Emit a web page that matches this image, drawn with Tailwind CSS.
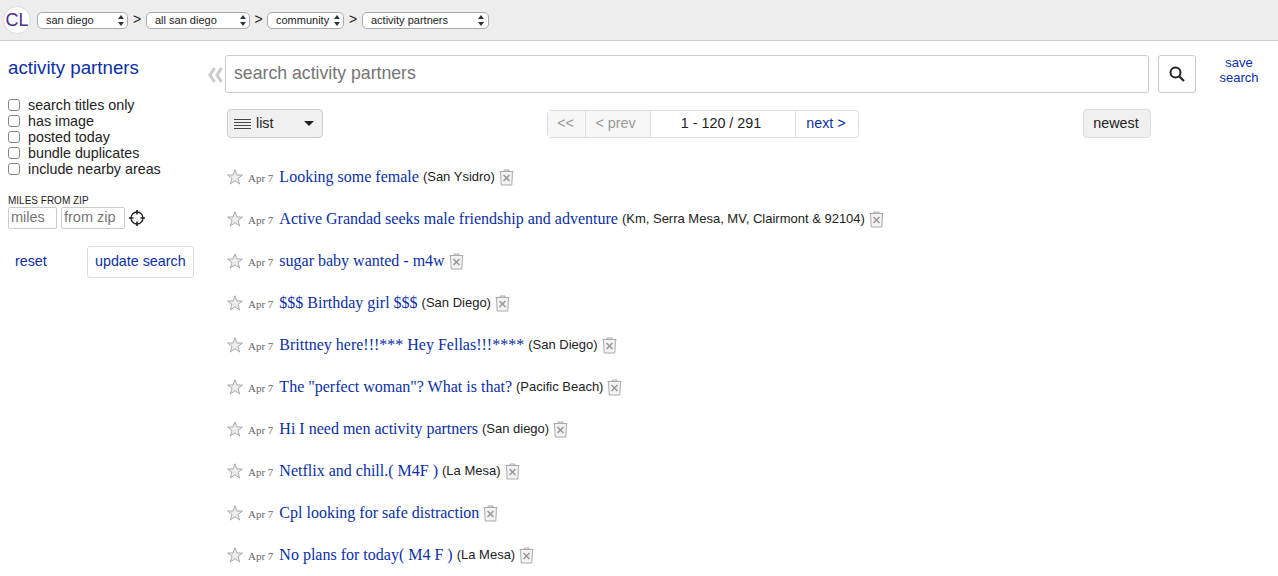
<!DOCTYPE html>
<html lang="en">
  <head>
    <meta charset="UTF-8" />
    <meta name="viewport" content="width=device-width, initial-scale=1.0" />
    <script src="https://cdn.jsdelivr.net/npm/@tailwindcss/browser@4"></script>
    <title>activity partners</title>
  </head>
  <body class="h-[576px] overflow-hidden bg-white font-['Liberation_Sans',Arial,sans-serif] text-[#222]">
    <header class="flex h-[41px] items-center border-b border-[#ccc] bg-[#ededed] pl-[3px] text-[11px]">
      <a class="flex h-[28px] w-[28px] items-center justify-center rounded-full border border-[#ddd] bg-white text-[18px] text-[#4b2a8c]">CL</a>
      <div class="ml-[6px] flex h-[17px] w-[91px] items-center justify-between rounded-[5px] border border-[#aaa] bg-white pl-[8px] pr-[3px]">san diego<svg class="h-[11px] w-[6px] text-[#333]" viewBox="0 0 6 11" fill="currentColor"><path d="M3 0 6 4H0zM3 11 0 7h6z"/></svg></div>
      <span class="-mt-[3px] w-[18px] text-center text-[14px] leading-none">&gt;</span>
      <div class="flex h-[17px] w-[104px] items-center justify-between rounded-[5px] border border-[#aaa] bg-white pl-[8px] pr-[3px]">all san diego<svg class="h-[11px] w-[6px] text-[#333]" viewBox="0 0 6 11" fill="currentColor"><path d="M3 0 6 4H0zM3 11 0 7h6z"/></svg></div>
      <span class="-mt-[3px] w-[17px] text-center text-[14px] leading-none">&gt;</span>
      <div class="flex h-[17px] w-[77px] items-center justify-between rounded-[5px] border border-[#aaa] bg-white pl-[8px] pr-[3px]">community<svg class="h-[11px] w-[6px] text-[#333]" viewBox="0 0 6 11" fill="currentColor"><path d="M3 0 6 4H0zM3 11 0 7h6z"/></svg></div>
      <span class="-mt-[3px] w-[18px] text-center text-[14px] leading-none">&gt;</span>
      <div class="flex h-[17px] w-[127px] items-center justify-between rounded-[5px] border border-[#aaa] bg-white pl-[8px] pr-[4px]">activity partners<svg class="h-[11px] w-[6px] text-[#333]" viewBox="0 0 6 11" fill="currentColor"><path d="M3 0 6 4H0zM3 11 0 7h6z"/></svg></div>
    </header>

    <div class="flex">
      <aside class="w-[205px] shrink-0 pl-[8px]">
        <h1 class="mt-[16px] text-[18.700px] leading-[22px] text-[#0a2fa8]">activity partners</h1>
        <div class="mt-[18px] flex flex-col text-[14.300px] leading-[16px]">
          <label class="flex items-center gap-[8px]"><span class="h-[12px] w-[12px] rounded-[3px] border border-[#888] bg-white"></span>search titles only</label>
          <label class="flex items-center gap-[8px]"><span class="h-[12px] w-[12px] rounded-[3px] border border-[#888] bg-white"></span>has image</label>
          <label class="flex items-center gap-[8px]"><span class="h-[12px] w-[12px] rounded-[3px] border border-[#888] bg-white"></span>posted today</label>
          <label class="flex items-center gap-[8px]"><span class="h-[12px] w-[12px] rounded-[3px] border border-[#888] bg-white"></span>bundle duplicates</label>
          <label class="flex items-center gap-[8px]"><span class="h-[12px] w-[12px] rounded-[3px] border border-[#888] bg-white"></span>include nearby areas</label>
        </div>
        <div class="mt-[18px] text-[10px] leading-[12px]">MILES FROM ZIP</div>
        <div class="flex items-center gap-[4px]">
          <div class="flex h-[22px] w-[49px] items-center rounded-[2px] border border-[#ccc] pl-[2px] text-[14.500px] text-[#777]">miles</div>
          <div class="flex h-[22px] w-[64px] items-center rounded-[2px] border border-[#ccc] pl-[2px] text-[14.500px] text-[#777]">from zip</div>
          <svg class="h-[16px] w-[16px]" viewBox="0 0 16 16" fill="none" stroke="#222"><circle cx="8" cy="8" r="6" stroke-width="1.3"/><path d="M8 0v4.500M8 11.500V16M0 8h4.500M11.500 8H16" stroke-width="1.600"/></svg>
        </div>
        <div class="mt-[17px] flex items-center">
          <a class="ml-[7px] text-[14.300px] text-[#0a2fa8]">reset</a>
          <button class="ml-[40px] h-[32px] w-[107px] rounded-[3px] border border-[#ddd] bg-white text-[14.300px] text-[#0a2fa8]">update search</button>
        </div>
      </aside>

      <main class="min-w-0 flex-1">
        <div class="mt-[14px] flex items-start">
          <svg class="ml-[2px] mt-[12px] h-[16px] w-[18px]" viewBox="0 0 18 16" fill="none" stroke="#ccc" stroke-width="3.200"><path d="M7.500 1 3 8l4.500 7M14.500 1 10 8l4.500 7"/></svg>
          <div class="flex h-[38px] w-[924px] items-center rounded-[3px] border border-[#ccc] pb-[1px] pl-[8px] text-[17.700px] text-[#757575]">search activity partners</div>
          <button class="ml-[9px] flex h-[38px] w-[38px] items-center justify-center rounded-[3px] border border-[#ccc]">
            <svg class="h-[16px] w-[16px]" viewBox="0 0 16 16" fill="none" stroke="#222"><circle cx="6.500" cy="6.500" r="5" stroke-width="2"/><path d="m10.500 10.500 4.500 4.500" stroke-width="2.200"/></svg>
          </button>
          <a class="ml-[23px] w-[40px] text-center text-[13px] leading-[15px] text-[#0a2fa8]">save search</a>
        </div>

        <div class="mt-[16px] flex h-[29px] items-center pl-[22px] text-[14.300px]">
          <div class="flex h-[29px] w-[96px] items-center rounded-[4px] border border-[#ccc] bg-[#f0f0f0] pl-[6px]">
            <svg class="h-[12px] w-[17px]" viewBox="0 0 17 12" stroke="#444"><path d="M0 1.500h17M0 4.500h17M0 7.500h17M0 10.500h17"/></svg>
            <span class="ml-[5px]">list</span>
            <svg class="ml-[31px] h-[5px] w-[10px]" viewBox="0 0 10 5" fill="#222"><path d="M0 0h10L5 5z"/></svg>
          </div>
          <div class="ml-[224px] flex h-[28px] w-[312px] items-center rounded-[4px] border border-[#ddd]">
            <span class="flex h-full w-[38px] items-center justify-center border-r border-[#ddd] bg-[#f7f7f7] pr-[2px] text-[#999]">&lt;&lt;</span>
            <span class="flex h-full w-[65px] items-center justify-center border-r border-[#ddd] bg-[#f7f7f7] pr-[5px] text-[#999]">&lt; prev</span>
            <span class="flex h-full w-[145px] items-center justify-center border-r border-[#ddd] pr-[4px]">1 - 120 / 291</span>
            <a class="flex h-full flex-1 items-center justify-center pr-[2px] text-[#0a2fa8]">next &gt;</a>
          </div>
          <div class="ml-[224px] flex h-[29px] w-[68px] items-center justify-center rounded-[4px] border border-[#ddd] bg-[#f0f0f0] pr-[2px]">newest</div>
        </div>

        <ul id="rows" class="mt-[18px] pl-[22px]"></ul>
      </main>
    </div>

    <script>
      const rows = [
        ["Looking some female", "San Ysidro"],
        ["Active Grandad seeks male friendship and adventure", "Km, Serra Mesa, MV, Clairmont & 92104"],
        ["sugar baby wanted - m4w", ""],
        ["$$$ Birthday girl $$$", "San Diego"],
        ["Brittney here!!!*** Hey Fellas!!!****", "San Diego"],
        ['The "perfect woman"? What is that?', "Pacific Beach"],
        ["Hi I need men activity partners", "San diego"],
        ["Netflix and chill.( M4F )", "La Mesa"],
        ["Cpl looking for safe distraction", ""],
        ["No plans for today( M4 F )", "La Mesa"],
      ];

      const star = `<svg class="h-[16px] w-[16px] shrink-0" viewBox="0 0 16 16" fill="#eee" stroke="#aaa"><path d="M8 .8l1.900 5.200h5.600l-4.500 3.400 1.700 5.600L8 11.700l-4.700 3.300L5 9.400.500 6h5.600z"/></svg>`;
      const hide = `<svg class="ml-[4px] h-[17px] w-[15px] shrink-0" viewBox="0 0 15 17" fill="#f3f3f3" stroke="#aaa"><path d="M.500 2.500h14M5 2.500V1h5v1.500"/><path d="M1.500 2.500l.7 13.500h10.600l.7-13.500z"/><path d="M4.500 6l6 6M10.500 6l-6 6" fill="none" stroke="#999" stroke-width="1.600"/></svg>`;

      document.getElementById("rows").innerHTML = rows
        .map(
          ([title, place]) => `
          <li class="flex h-[42px] items-center">
            ${star}
            <span class="ml-[5px] mt-[2px] font-['Liberation_Serif',serif] text-[11px] text-[#666]">Apr 7</span>
            <a class="ml-[6px] font-['Liberation_Serif',serif] text-[16px] text-[#0a2fa8]">${title}</a>
            ${place ? `<span class="ml-[4px] text-[13px]">(${place.replace("&", "&amp;")})</span>` : ""}
            ${hide}
          </li>`
        )
        .join("");
    </script>
  </body>
</html>
